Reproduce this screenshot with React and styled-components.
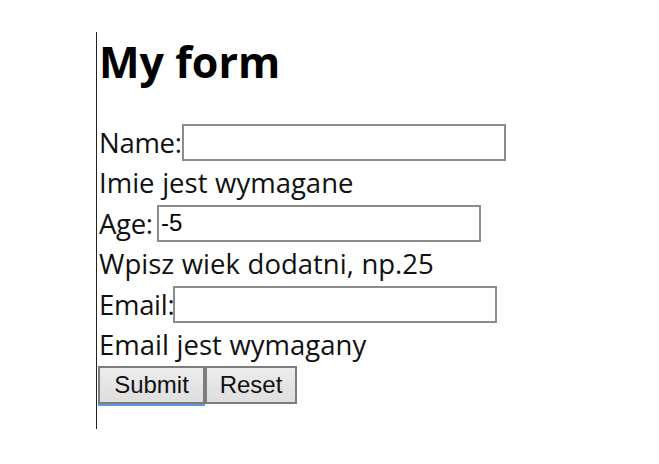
import React from "react";
import styled, { createGlobalStyle } from "styled-components";

const Global = createGlobalStyle`
  html, body { margin: 0; padding: 0; background: #fff; }
  body { font-family: "Open Sans", "Noto Sans", sans-serif; color: #111; }
`;

const Page = styled.div`
  padding: 32px 0 0 96px;
  width: 659px;
  height: 464px;
  box-sizing: border-box;
`;

const Panel = styled.div`
  border-left: 1.5px solid #222;
  height: 397px;
  padding-left: 1px;
  display: flex;
  flex-direction: column;
`;

const Title = styled.h1`
  margin: 6px 0 36px 1px;
  font-family: "Open Sans", sans-serif;
  font-weight: 700;
  font-size: 43px;
  line-height: 48px;
  color: #000;
`;

const Row = styled.div`
  display: flex;
  align-items: center;
  height: ${(p) => p.$h || 40}px;
  font-size: 27.5px;
  word-spacing: 0.5px;
  padding-left: 1px;
`;

const Label = styled.label`
  white-space: nowrap;
  width: ${(p) => p.$w}px;
  flex: none;
  letter-spacing: -0.3px;
`;

const Input = styled.input`
  box-sizing: border-box;
  width: 324px;
  height: 37px;
  margin: 0;
  border: 2px solid #8c8c8c;
  padding: 0 2px;
  font-family: "Liberation Sans", Arial, sans-serif;
  font-size: 24px;
  color: #000;
  outline: none;
`;

const Buttons = styled.div`
  display: flex;
  margin-top: 1px;
`;

const Button = styled.button`
  box-sizing: border-box;
  height: 38px;
  padding: 0;
  margin: 0;
  font-family: "Liberation Sans", Arial, sans-serif;
  font-size: 24px;
  color: #111;
  background: linear-gradient(#ececec, #dedede);
  border: 2px solid #7d7d7d;
  box-shadow: ${(p) => (p.$focused ? "0 2px 0 #5b9be6" : "none")};
  width: ${(p) => p.$w}px;
`;

export default function App() {
  return (
    <>
      <Global />
      <Page>
        <Panel>
          <Title>My form</Title>
          <Row $h={40}>
            <Label $w={83}>Name:</Label>
            <Input type="text" />
          </Row>
          <Row $h={41}>Imie jest wymagane</Row>
          <Row $h={40}>
            <Label $w={58}>Age:</Label>
            <Input type="text" defaultValue="-5" />
          </Row>
          <Row $h={41}>Wpisz wiek dodatni, np.25</Row>
          <Row $h={40}>
            <Label $w={74}>Email:</Label>
            <Input type="text" />
          </Row>
          <Row $h={41}>Email jest wymagany</Row>
          <Buttons>
            <Button $focused $w={107}>Submit</Button>
            <Button $w={92}>Reset</Button>
          </Buttons>
        </Panel>
      </Page>
    </>
  );
}
